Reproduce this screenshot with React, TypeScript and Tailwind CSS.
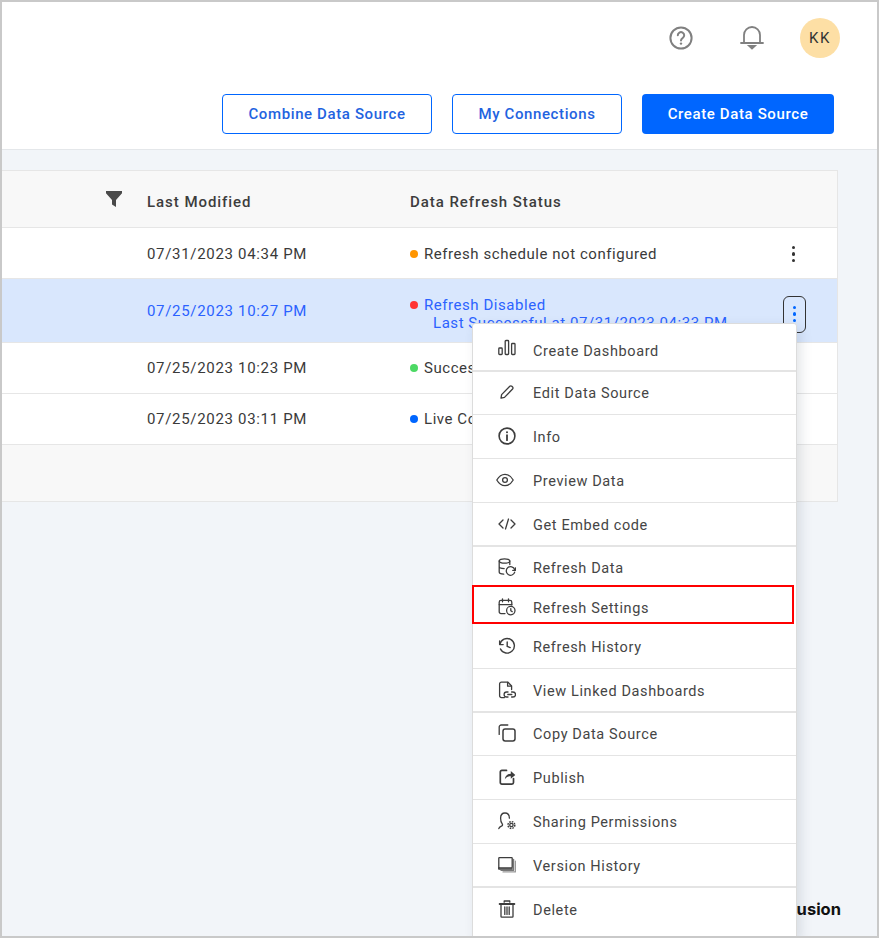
import React from "react";

const S = ({ children, className = "" }: { children: React.ReactNode; className?: string }) => (
  <svg viewBox="0 0 18 18" fill="none" stroke="#3d3d3d" strokeWidth="1.3" strokeLinecap="round" strokeLinejoin="round" className={"w-[18px] h-[18px] " + className}>
    {children}
  </svg>
);

const BarsI = () => (
  <S className="-translate-y-[2px]">
    <rect x="0.8" y="9" width="3.4" height="6.5" rx="0.8" />
    <rect x="7.2" y="1.5" width="3.4" height="14" rx="0.8" />
    <rect x="13.6" y="4.5" width="3.4" height="11" rx="0.8" />
  </S>
);
const EditI = () => (
  <S>
    <path d="M3 15.2 3.6 11.6 11.8 3.2a1.4 1.4 0 0 1 2 0l.8.8a1.4 1.4 0 0 1 0 2L6.5 14.4Z" />
  </S>
);
const InfoI = () => (
  <S>
    <circle cx="9" cy="9" r="7.9" strokeWidth="1.6" />
    <path d="M9 8.2v5" strokeWidth="1.8" />
    <circle cx="9" cy="5.3" r="1" fill="#3d3d3d" stroke="none" />
  </S>
);
const EyeI = () => (
  <S className="-ml-[2px]">
    <path d="M.8 9C3 5.2 5.8 3.3 9 3.3s6 1.9 8.2 5.7C15 12.8 12.2 14.7 9 14.7S3 12.8.8 9Z" />
    <circle cx="9" cy="9" r="2.4" />
  </S>
);
const CodeI = () => (
  <S>
    <path d="M5 5 1 9l4 4M13 5l4 4-4 4M10.5 4l-3 10" />
  </S>
);
const RefreshDataI = () => (
  <S>
    <ellipse cx="6.5" cy="3" rx="5.3" ry="2.2" />
    <path d="M1.2 3v11c0 1.2 2 2 4.5 2.1M1.2 8.5c0 1.2 2.2 2.1 5 2.1M11.8 3v3.5" />
    <path d="M16.6 11.5a4.3 4.3 0 1 0 .1 2.6" />
    <path d="M17.4 9.8v2.6h-2.6" />
  </S>
);
const CalClockI = () => (
  <S>
    <path d="M7 15.6H3a1.8 1.8 0 0 1-1.8-1.8V4.2A1.8 1.8 0 0 1 3 2.4h9a1.8 1.8 0 0 1 1.8 1.8V7" />
    <path d="M4.5.8v3M10.5.8v3M1.2 6.6h12.6" />
    <circle cx="12.8" cy="12.6" r="4.2" />
    <path d="M12.8 10.6v2.2l1.4.8" />
  </S>
);
const HistoryI = () => (
  <S>
    <path d="M1.6 4v3.6h3.6" />
    <path d="M1.9 7.4A7.3 7.3 0 1 1 2.5 12" strokeWidth="1.4" />
    <path d="M9.2 5v4.4l3 1.2" strokeWidth="1.4" />
  </S>
);
const LinkedI = () => (
  <S>
    <path d="M6.5 16.6H3.4a1.8 1.8 0 0 1-1.8-1.8V3a1.8 1.8 0 0 1 1.8-1.8H10l3.6 3.8v3.6" />
    <path d="M9.6 1.4v3.8h3.8" />
    <path d="M10 11H8.6a2.5 2.5 0 0 0 0 5H10M13.6 11H15a2.5 2.5 0 0 1 0 5h-1.4M9.8 13.5h4" />
  </S>
);
const CopyI = () => (
  <S>
    <path d="M1.2 10.4V3A2 2 0 0 1 3.2 1h6.6" />
    <rect x="5" y="5" width="12" height="12" rx="2.2" strokeWidth="1.5" />
  </S>
);
const PublishI = () => (
  <S>
    <path d="M15.5 10.5v4a1.6 1.6 0 0 1-1.6 1.6H3.9a1.6 1.6 0 0 1-1.6-1.6V4a1.6 1.6 0 0 1 1.6-1.6h4.6" strokeWidth="1.7" />
    <path d="M6.8 11.2c.4-3.4 2.8-5.4 6-5.4V3.1L17.3 7l-4.5 3.8V8.3c-2.4 0-4.4.8-6 2.9Z" fill="#3d3d3d" stroke="none" />
  </S>
);
const SharingI = () => (
  <S>
    <path d="M.8 16.6c.4-1.5 1.8-2 3-2.6.9-.5.9-1.6.3-2.4C3 10.2 2.6 8.6 2.6 6.2 2.6 2.8 4.6 1 7 1s4.4 1.8 4.4 5.2" />
    <circle cx="13.4" cy="13" r="1.7" strokeWidth="1.3" />
    <circle cx="13.4" cy="13" r="3.4" strokeWidth="1.5" strokeDasharray="1.6 1.07" strokeLinecap="butt" />
  </S>
);
const VersionI = () => (
  <S>
    <rect x="0.8" y="1.6" width="13.4" height="10.2" rx="0.6" />
    <path d="M.8 11.8v1.2h13.4" strokeWidth="1.5" />
    <path d="M15.6 3.5v10.8H3" stroke="#777" strokeWidth="1.3" />
    <path d="M17.4 5v10.9H5" stroke="#999" strokeWidth="1.2" />
  </S>
);
const TrashI = () => (
  <S>
    <path d="M6.2 2.2V1h5.6v1.2" />
    <path d="M1.6 4h14.8" strokeWidth="1.8" />
    <path d="M3 4.6v11.8c0 .4.3.7.7.7h10.6c.4 0 .7-.3.7-.7V4.6" />
    <path d="M6.8 7v7.4M9 7v7.4M11.2 7v7.4" />
  </S>
);

const menu: { label: string; Icon: () => React.ReactElement; cls: string }[] = [
  { label: "Create Dashboard", Icon: BarsI, cls: "h-[48px] border-b-2 border-[#e4e4e4] pt-[9px]" },
  { label: "Edit Data Source", Icon: EditI, cls: "h-[43px] border-b border-[#e4e4e4] pt-[2px]" },
  { label: "Info", Icon: InfoI, cls: "h-[44px] border-b border-[#e4e4e4] pt-[2px]" },
  { label: "Preview Data", Icon: EyeI, cls: "h-[44px] border-b border-[#e4e4e4] pt-[2px]" },
  { label: "Get Embed code", Icon: CodeI, cls: "h-[44px] border-b-2 border-[#e4e4e4] pt-[4px]" },
  { label: "Refresh Data", Icon: RefreshDataI, cls: "h-[41px] pt-[2px]" },
  { label: "Refresh Settings", Icon: CalClockI, cls: "h-[38px] pt-[4px]" },
  { label: "Refresh History", Icon: HistoryI, cls: "h-[43px] border-b border-[#e4e4e4] pt-[1px]" },
  { label: "View Linked Dashboards", Icon: LinkedI, cls: "h-[44px] border-b-2 border-[#e4e4e4] pt-[4px]" },
  { label: "Copy Data Source", Icon: CopyI, cls: "h-[43px] border-b border-[#e4e4e4] pt-[2px]" },
  { label: "Publish", Icon: PublishI, cls: "h-[44px] border-b border-[#e4e4e4] pt-[2px]" },
  { label: "Sharing Permissions", Icon: SharingI, cls: "h-[44px] border-b border-[#e4e4e4] pt-[2px]" },
  { label: "Version History", Icon: VersionI, cls: "h-[44px] border-b-2 border-[#e4e4e4] pt-[4px]" },
  { label: "Delete", Icon: TrashI, cls: "h-[48px] pb-[3px]" },
];

const Kebab = ({ color }: { color: string }) => (
  <div className="flex flex-col items-center gap-[3px]">
    <span className={"w-[3.5px] h-[3.5px] rounded-full " + color} />
    <span className={"w-[3.5px] h-[3.5px] rounded-full " + color} />
    <span className={"w-[3.5px] h-[3.5px] rounded-full " + color} />
  </div>
);

const Row = ({ date, dot, status, cls = "" }: { date: string; dot: string; status: string; cls?: string }) => (
  <div className={"h-[51px] box-border flex items-center border-b border-[#e6e6e6] bg-white text-[#3a3a3a] " + cls}>
    <div className="w-[145px]" />
    <div className="w-[263px] tracking-[0.68px]">{date}</div>
    <div className={"w-2 h-2 rounded-full mr-[6px] " + dot} />
    <div className="flex-1">{status}</div>
    <div className="mr-[42px]">
      <Kebab color="bg-[#333]" />
    </div>
  </div>
);

export default function App() {
  return (
    <div className="relative w-[879px] h-[938px] border-2 border-[#c9c9c9] bg-[#f2f5f9] overflow-hidden flex flex-col font-['Roboto',sans-serif] text-[15px] tracking-[0.55px]">
      <header className="h-[148px] bg-white border-b border-[#e4e7ea] flex flex-col">
        <div className="flex items-center justify-end pr-[37px] pt-[16px]">
          <svg viewBox="0 0 24 24" fill="none" stroke="#808080" strokeWidth="2" className="w-6 h-6">
            <circle cx="12" cy="12" r="10.6" />
            <path d="M8.8 9.3a3.2 3.2 0 1 1 4.8 2.8c-1 .6-1.6 1.1-1.6 2.4" strokeLinecap="round" />
            <circle cx="12" cy="17.6" r="1.2" fill="#808080" stroke="none" />
          </svg>
          <svg viewBox="0 0 24 24" fill="none" stroke="#808080" strokeWidth="1.8" strokeLinecap="round" className="w-6 h-6 ml-[47px]">
            <path d="M1 17h22M4 17V9a8 8 0 0 1 16 0v8" />
            <path d="M9.2 20h5.6L12 22.5Z" fill="#808080" />
          </svg>
          <div className="w-10 h-10 rounded-full bg-[#fddfa5] ml-9 flex items-center justify-center text-[15px] tracking-[1.5px] text-[#333]">
            KK
          </div>
        </div>
        <div className="flex justify-end gap-5 pr-[43px] mt-9 font-medium tracking-[0.62px]">
          <button className="w-[210px] h-10 pt-[1px] rounded border border-[#0066ff] text-[#1f63e0] bg-white">Combine Data Source</button>
          <button className="w-[170px] h-10 pt-[1px] rounded border border-[#0066ff] text-[#1f63e0] bg-white">My Connections</button>
          <button className="w-[192px] h-10 pt-[1px] rounded bg-[#0066ff] text-white">Create Data Source</button>
        </div>
      </header>

      <main className="mt-5 mr-[39px] border border-l-0 border-[#e6e6e6]">
        <div className="h-[57px] box-border pt-[7px] flex items-center bg-[#f8f8f8] border-b border-[#e6e6e6] font-medium text-[#3d3d3d] tracking-[0.95px]">
          <div className="w-[145px] flex justify-end pr-[25px] pb-[7px]">
            <svg viewBox="0 0 16 16" className="w-4 h-4" fill="#4a4a4a">
              <path d="M0 0h16v2.2L10 9v7l-4-2.6V9L0 2.2Z" />
            </svg>
          </div>
          <div className="w-[263px]">Last Modified</div>
          <div>Data Refresh Status</div>
        </div>
        <Row date="07/31/2023 04:34 PM" dot="bg-[#ff9500]" status="Refresh schedule not configured" cls="pt-[2px]" />
        <div className="h-[64px] box-border pt-[2px] flex items-center border-b border-[#e6e6e6] bg-[#d9e7fd] text-[#2b62ff]">
          <div className="w-[145px]" />
          <div className="w-[263px] tracking-[0.68px]">07/25/2023 10:27 PM</div>
          <div className="flex-1 leading-[18px] pt-[5px]">
            <div className="flex items-center">
              <span className="w-2 h-2 rounded-full bg-[#ff3333] mr-[6px]" />
              Refresh Disabled
            </div>
            <div className="pl-[23px]">Last Successful at 07/31/2023 04:33 PM</div>
          </div>
          <div className="w-[23px] h-[37px] mr-[31px] mt-[5px] border border-[#333] rounded-[6px] flex items-center justify-center">
            <Kebab color="bg-[#0066ff]" />
          </div>
        </div>
        <Row date="07/25/2023 10:23 PM" dot="bg-[#4cd964]" status="Successful" />
        <Row date="07/25/2023 03:11 PM" dot="bg-[#0066ff]" status="Live Connection" />
        <div className="h-[56px] bg-[#f8f8f8]" />
      </main>

      <footer className="flex-1 flex items-end justify-end pr-9 pb-[17px]">
        <span className="font-['Inter',sans-serif] font-bold text-[16.5px] tracking-normal text-[#111] leading-[20px]">Fusion</span>
      </footer>

      <div className="absolute left-[470px] top-[321px] w-[325px] h-[615px] bg-white rounded-t-[3px] border border-[#dcdcdc] shadow-[4px_4px_12px_rgba(60,70,90,0.14)] text-[14.5px] tracking-[0.62px] text-[#454545]">
        {menu.map(({ label, Icon, cls }) => (
          <div key={label} className={"box-border flex items-center pl-[25px] " + cls}>
            <span className="w-[18px] h-[18px] mb-1 flex items-center">
              <Icon />
            </span>
            <span className="ml-[17px]">{label}</span>
          </div>
        ))}
      </div>
      <div className="absolute left-[470px] top-[583px] w-[322px] h-[39px] border-2 border-[#ff0000]" />
    </div>
  );
}
